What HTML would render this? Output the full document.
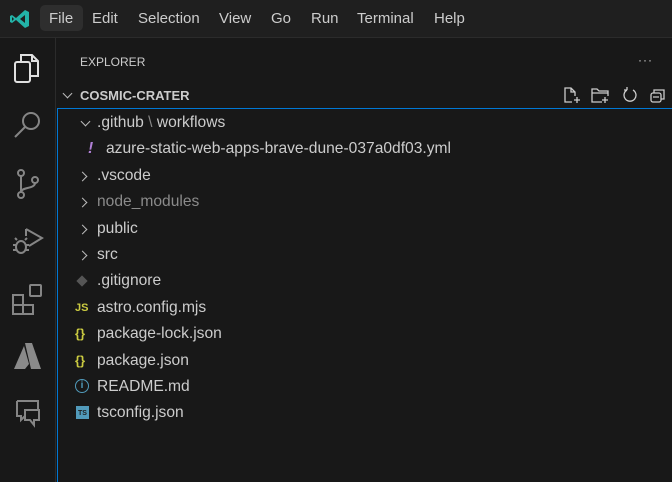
<!DOCTYPE html><html><head><style>
*{margin:0;padding:0;box-sizing:border-box}
body{width:672px;height:482px;background:#181818;font-family:"Segoe UI","Liberation Sans",sans-serif;color:#ccc;position:relative;overflow:hidden}
.title{position:absolute;left:0;top:0;width:672px;height:38px;background:#1f1f1f;border-bottom:1px solid #2b2b2b}
.menu{position:absolute;top:10px;font-size:15px;color:#ccc}
.act{position:absolute;left:0;top:38px;width:56px;height:444px;background:#181818;border-right:1px solid #2b2b2b}
.ic{position:absolute;left:12px}
.row{position:absolute;left:58px;height:26px;line-height:26px;font-size:15.6px;color:#ccc;white-space:nowrap;margin-top:2px}
.chev{position:absolute;width:7px;height:7px;border-right:1.3px solid #bbb;border-bottom:1.3px solid #bbb;margin-top:2px}
</style></head><body>
<div class="title"></div>
<svg style="position:absolute;left:9px;top:8px" width="22" height="22" viewBox="0 0 22 22"><path d="M16 2 L20 4 V18 L16 20 L7 12 L3 15 L1 14 V8 L3 7 L7 10 Z M16 7 L11 11 L16 15 Z M3 9 V13 L5 11 Z" fill="#23b3a8"/></svg>
<div style="position:absolute;left:40px;top:5px;width:43px;height:26px;background:#2e2e2e;border-radius:5px"></div>
<div class="menu" style="left:49px">File</div>
<div class="menu" style="left:92px">Edit</div>
<div class="menu" style="left:138px">Selection</div>
<div class="menu" style="left:219px">View</div>
<div class="menu" style="left:271px">Go</div>
<div class="menu" style="left:311px">Run</div>
<div class="menu" style="left:357px">Terminal</div>
<div class="menu" style="left:434px">Help</div>
<div class="act"></div>
<svg class="ic" style="top:52px" width="30" height="32" viewBox="0 0 30 32" fill="none" stroke="#e0e0e0" stroke-width="2"><path d="M9 9 V3 H20 L26 9 V24 H18"/><path d="M20 3 V9 H26"/><rect x="3" y="10" width="15" height="20" rx="2"/></svg>
<svg class="ic" style="top:108px" width="32" height="32" viewBox="0 0 32 32" fill="none" stroke="#858585" stroke-width="2"><circle cx="19" cy="13" r="8"/><path d="M13 19 L3 29"/></svg>
<svg class="ic" style="top:168px" width="32" height="32" viewBox="0 0 32 32" fill="none" stroke="#858585" stroke-width="2"><circle cx="9" cy="5" r="3"/><circle cx="9" cy="27" r="3"/><circle cx="23" cy="12" r="3"/><path d="M9 8 V24 M23 15 C23 21 9 19 9 24"/></svg>
<svg class="ic" style="top:225px" width="32" height="32" viewBox="0 0 32 32" fill="none" stroke="#858585" stroke-width="2"><path d="M14 4 L30 13 L17 21"/><path d="M14 4 V11"/><ellipse cx="9" cy="22" rx="5" ry="6"/><path d="M1 20 H4 M1 25 H4 M14 20 H17 M14 25 H17 M5 15 L3 13 M13 15 L15 13"/></svg>
<svg class="ic" style="top:283px" width="32" height="32" viewBox="0 0 32 32" fill="none" stroke="#858585" stroke-width="2"><rect x="1" y="12" width="10" height="10"/><rect x="1" y="22" width="10" height="9"/><rect x="11" y="22" width="10" height="9"/><rect x="18" y="2" width="11" height="11" rx="1"/></svg>
<svg class="ic" style="top:340px" width="32" height="32" viewBox="0 0 32 32"><path d="M13 3 H20 L29 29 H19 Z" fill="#8a8a8a"/><path d="M12 6 L2 29 H13 L17 24 Z" fill="#8a8a8a"/></svg>
<svg class="ic" style="top:398px" width="32" height="32" viewBox="0 0 32 32" fill="none" stroke="#858585" stroke-width="2"><path d="M5 3 H26 V13 M5 3 V18 H9 V22 L13 18"/><path d="M13 12 H27 V22 H22 V27 L18 22 H13 Z"/></svg>
<div style="position:absolute;left:80px;top:55px;font-size:12px;color:#ccc">EXPLORER</div>
<div style="position:absolute;left:638px;top:53px;font-size:12px;color:#ccc;letter-spacing:1px">···</div>
<div class="chev" style="left:64px;top:88px;transform:rotate(45deg)"></div>
<div style="position:absolute;left:80px;top:88px;font-size:13px;font-weight:bold;color:#ccc">COSMIC-CRATER</div>
<svg style="position:absolute;left:563px;top:86px" width="108" height="18" viewBox="0 0 108 18" fill="none" stroke="#ccc" stroke-width="1.3"><path d="M9 16 H2 V2 H8 L12 6 V10 M8 2 V6 H12 M14 11 V17 M11 14 H17"/><path d="M39 16 H29 V3 H34 L36 5 H45 V10 M29 7 H45 M42 11 V17 M39 14 H45"/><path d="M64 4 A6 6 0 1 0 70 4 M64 4 V1 M64 4 H61"/><rect x="88" y="7" width="10" height="9" rx="2"/><path d="M91 7 V4 H101 V13 H98 M90 11 H96"/></svg>
<div style="position:absolute;left:57px;top:108px;width:615px;height:374px;border-left:1px solid #0078d4;border-top:1px solid #0078d4"></div>
<div class="chev" style="left:82px;top:116px;transform:rotate(45deg)"></div>
<div class="row" style="left:97px;top:108px">.github<span style="color:#888"> \ </span>workflows</div>
<div class="row" style="left:88px;top:134px;color:#b180d7;font-weight:bold;font-style:italic">!</div>
<div class="row" style="left:106px;top:134px">azure-static-web-apps-brave-dune-037a0df03.yml</div>
<div class="chev" style="left:79px;top:171px;transform:rotate(-45deg)"></div>
<div class="row" style="left:97px;top:161px">.vscode</div>
<div class="chev" style="left:79px;top:197px;transform:rotate(-45deg)"></div>
<div class="row" style="left:97px;top:187px;color:#8b8b8b">node_modules</div>
<div class="chev" style="left:79px;top:224px;transform:rotate(-45deg)"></div>
<div class="row" style="left:97px;top:214px">public</div>
<div class="chev" style="left:79px;top:250px;transform:rotate(-45deg)"></div>
<div class="row" style="left:97px;top:240px">src</div>
<div style="position:absolute;left:78px;top:277px;width:8px;height:8px;background:#555;transform:rotate(45deg)"></div>
<div class="row" style="left:97px;top:266px">.gitignore</div>
<div class="row" style="left:75px;top:293px;font-size:11px;font-weight:bold;color:#cbcb41">JS</div>
<div class="row" style="left:97px;top:293px">astro.config.mjs</div>
<div class="row" style="left:75px;top:319px;font-size:13px;font-weight:bold;color:#cbcb41">{}</div>
<div class="row" style="left:97px;top:319px">package-lock.json</div>
<div class="row" style="left:75px;top:346px;font-size:13px;font-weight:bold;color:#cbcb41">{}</div>
<div class="row" style="left:97px;top:346px">package.json</div>
<div style="position:absolute;left:75px;top:379px;width:14px;height:14px;border:1.5px solid #519aba;border-radius:50%;color:#519aba;font-size:10px;line-height:11px;text-align:center;font-weight:bold">i</div>
<div class="row" style="left:97px;top:372px">README.md</div>
<div style="position:absolute;left:76px;top:406px;width:13px;height:13px;background:#519aba;color:#1f1f1f;font-size:7px;line-height:16px;text-align:center;font-weight:bold">TS</div>
<div class="row" style="left:97px;top:398px">tsconfig.json</div>
</body></html>
